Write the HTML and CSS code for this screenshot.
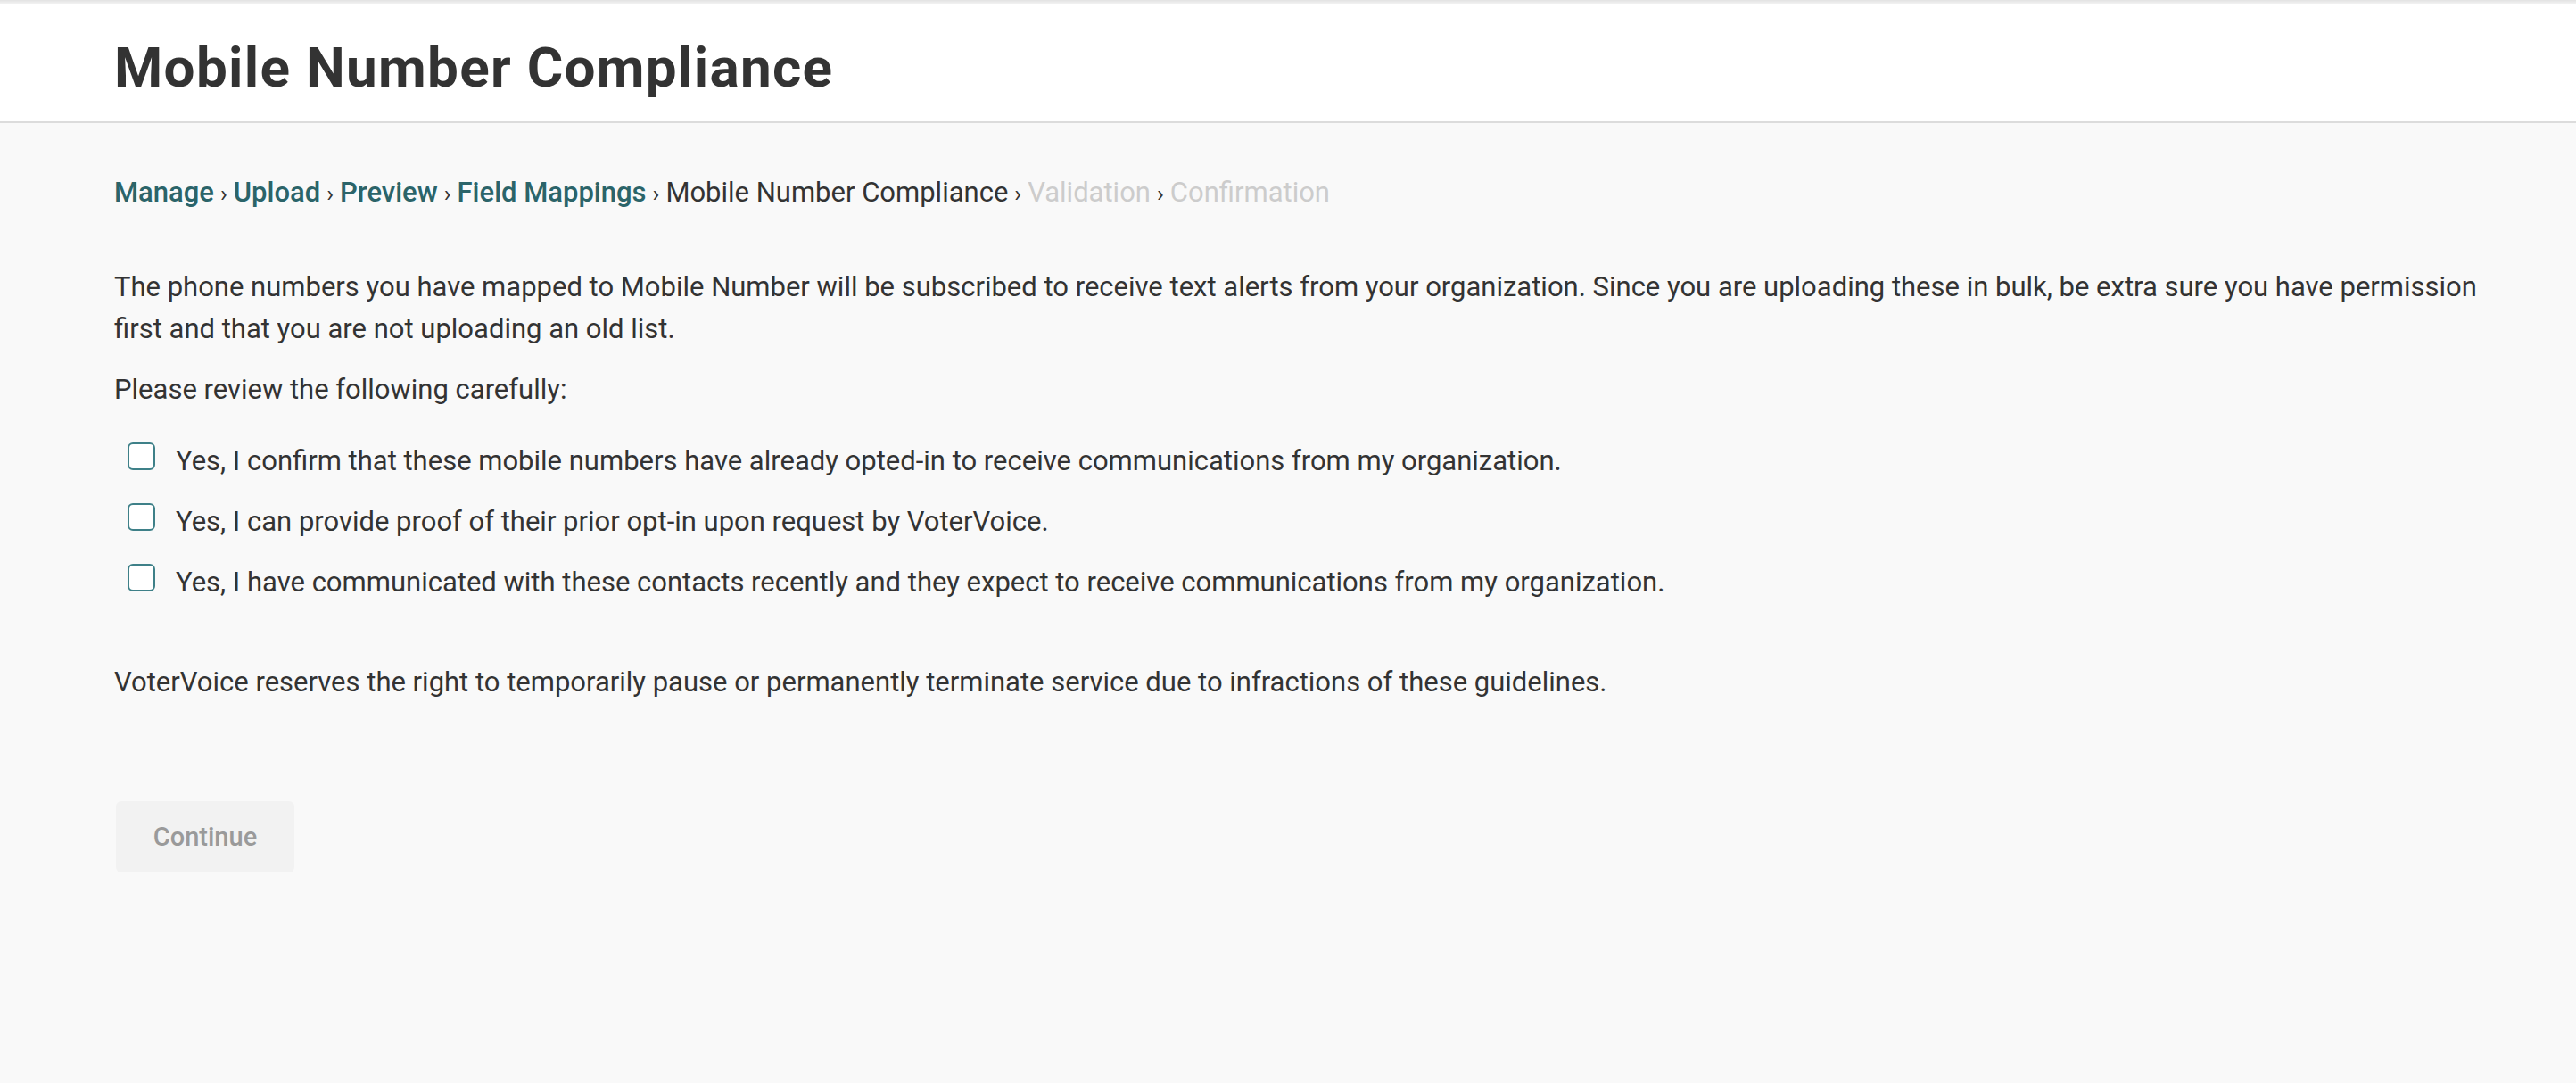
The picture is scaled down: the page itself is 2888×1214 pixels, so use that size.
FILE: index.html
```html
<!DOCTYPE html>
<html lang="en">
<head>
<meta charset="utf-8">
<title>Mobile Number Compliance</title>
<link rel="stylesheet" href="styles.css">
</head>
<body>
<div class="top-strip"></div>
<header class="page-header">
  <h1 class="page-title">Mobile Number Compliance</h1>
</header>
<main class="content">
  <nav class="crumbs">
    <a class="crumb-link" href="#">Manage</a><span class="sep">›</span><a class="crumb-link" href="#">Upload</a><span class="sep">›</span><a class="crumb-link" href="#">Preview</a><span class="sep">›</span><a class="crumb-link" href="#">Field Mappings</a><span class="sep">›</span><span class="crumb-current">Mobile Number Compliance</span><span class="sep">›</span><span class="crumb-future">Validation</span><span class="sep">›</span><span class="crumb-future">Confirmation</span>
  </nav>
  <p class="intro">The phone numbers you have mapped to Mobile Number will be subscribed to receive text alerts from your organization. Since you are uploading these in bulk, be extra sure you have permission first and that you are not uploading an old list.</p>
  <p class="review">Please review the following carefully:</p>
  <div class="checks">
    <label class="check-row"><span class="box"></span><span class="check-text">Yes, I confirm that these mobile numbers have already opted-in to receive communications from my organization.</span></label>
    <label class="check-row"><span class="box"></span><span class="check-text">Yes, I can provide proof of their prior opt-in upon request by VoterVoice.</span></label>
    <label class="check-row"><span class="box"></span><span class="check-text">Yes, I have communicated with these contacts recently and they expect to receive communications from my organization.</span></label>
  </div>
  <p class="notice">VoterVoice reserves the right to temporarily pause or permanently terminate service due to infractions of these guidelines.</p>
  <button class="continue" type="button">Continue</button>
</main>
</body>
</html>
```
FILE: styles.css
```css
html, body {
  margin: 0;
  padding: 0;
}
body {
  background: #f9f9f9;
  font-family: Roboto, "Liberation Sans", sans-serif;
  color: #333333;
  font-size: 31px;
  line-height: 47px;
  min-height: 1214px;
}
.top-strip {
  height: 4px;
  background: linear-gradient(#e2e2e2, #f2f2f2);
}
.page-header {
  background: #ffffff;
  height: 134px;
  box-sizing: border-box;
  padding: 41px 0 0 128px;
  border-bottom: 2px solid #dcdcdc;
}
.page-title {
  margin: 0;
  font-size: 62px;
  line-height: 62px;
  font-weight: 700;
  color: #333333;
  letter-spacing: 1.3px;
}
.content {
  padding: 54px 80px 0 128px;
}
.crumbs {
  line-height: 47px;
  white-space: nowrap;
}
.crumb-link {
  color: #2b6469;
  font-weight: 500;
  text-decoration: none;
}
.sep {
  color: #333333;
  margin: 0 7px;
  font-size: 26px;
}
.crumb-current {
  color: #333333;
}
.crumb-future {
  color: #cccccc;
}
.intro {
  margin: 57px 0 0 0;
}
.review {
  margin: 21px 0 0 0;
}
.checks {
  margin-top: 33px;
  display: flex;
  flex-direction: column;
  gap: 21px;
}
.check-row {
  display: flex;
  align-items: flex-start;
  gap: 23px;
  padding-left: 15px;
}
.box {
  flex: none;
  width: 31px;
  height: 31px;
  box-sizing: border-box;
  margin-top: 3px;
  border: 2px solid #3e8088;
  border-radius: 6px;
  background: #ffffff;
}
.notice {
  margin: 65px 0 0 0;
}
.continue {
  margin: 110px 0 0 2px;
  width: 200px;
  height: 80px;
  border: none;
  border-radius: 6px;
  background: #f2f2f2;
  color: #9a9a9a;
  font-family: Roboto, "Liberation Sans", sans-serif;
  font-size: 29px;
  font-weight: 500;
  padding: 0;
}
```
